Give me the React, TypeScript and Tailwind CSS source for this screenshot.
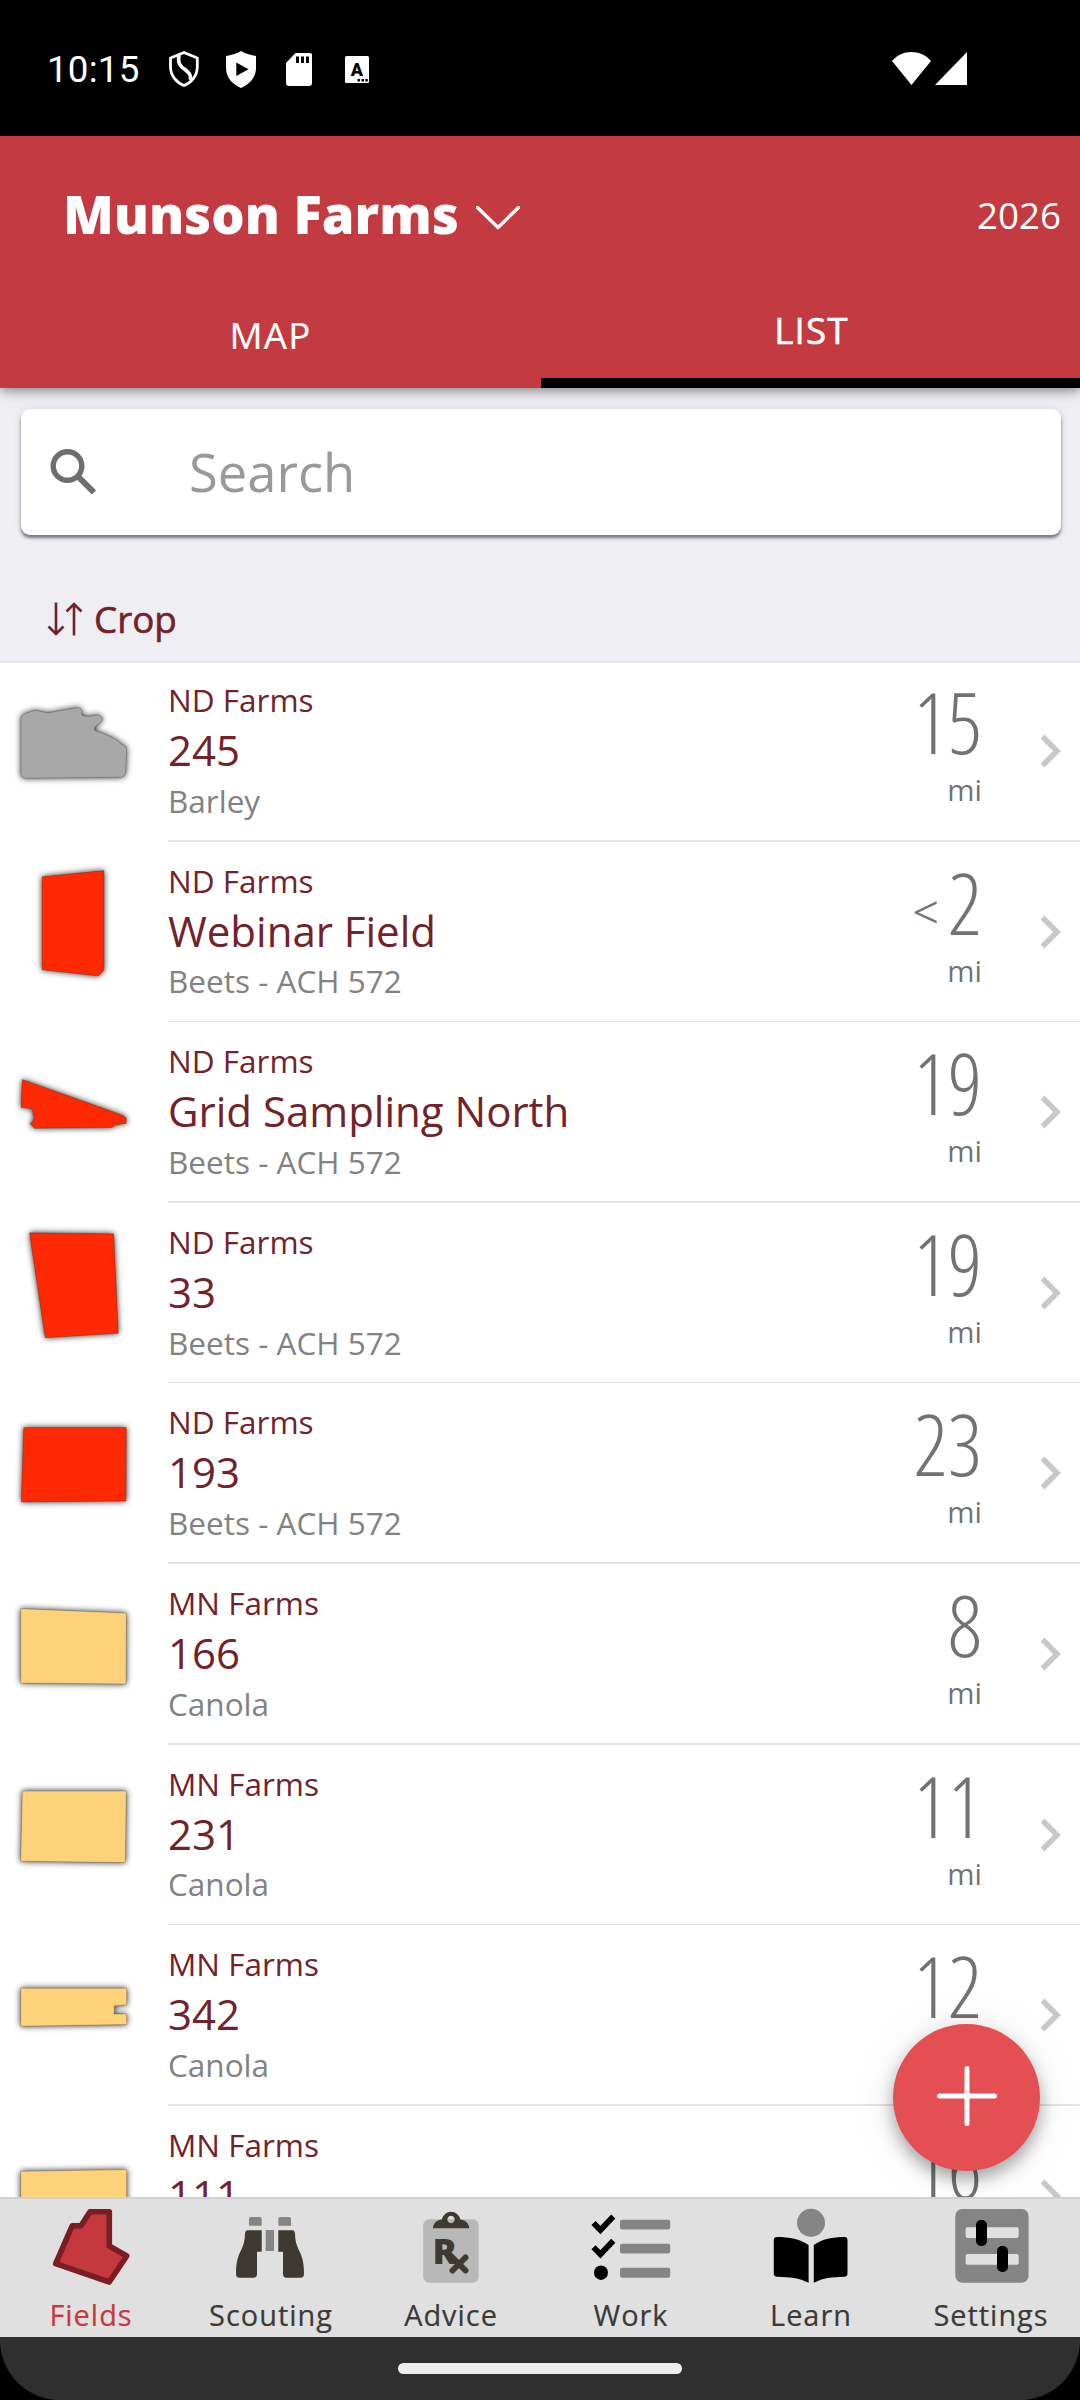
import type { ReactNode } from 'react'

// ── Data ──────────────────────────────────────────────────────────────────────

type Field = {
  farm: string
  name: string
  crop: string
  distance: string
  under?: boolean
  color: string
  shape: string
}

const fields: Field[] = [
  {
    farm: 'ND Farms',
    name: '245',
    crop: 'Barley',
    distance: '15',
    color: '#a8a8a8',
    shape:
      'M21 57 Q21 54.5 24 53 L34 49.6 Q37 49 41 50.5 Q48 52.5 53 51 L76 46.8 Q81 46 82 50 Q80 54 84 55 Q90 56 97 53.8 Q101 54 102.6 58.5 Q101 61.5 97 64 Q93 67 95 69.5 Q104 72.5 112 76.5 Q118 79 121 83 Q126.500 84.500 126.700 88 L125.500 112 Q125 116 121 116.300 L25 117.200 Q21 117 21 113 Z',
  },
  {
    farm: 'ND Farms',
    name: 'Webinar Field',
    crop: 'Beets - ACH 572',
    distance: '2',
    under: true,
    color: '#fe2900',
    shape: 'M42.1 34.8 L104 28.6 V128.1 L98.4 134 L42.1 127.8 Z',
  },
  {
    farm: 'ND Farms',
    name: 'Grid Sampling North',
    crop: 'Beets - ACH 572',
    distance: '19',
    color: '#fe2900',
    shape:
      'M22.2 57.4 L122 93 Q126.300 95.200 126.300 97 V101.400 L115.600 102.800 L111.800 105.600 L34.500 106.300 L29.900 101.800 Q33 99 34.400 96.600 Q32.500 93 32.900 89 Q32 86.300 29 86.300 L21 85.600 Z',
  },
  {
    farm: 'ND Farms',
    name: '33',
    crop: 'Beets - ACH 572',
    distance: '19',
    color: '#fe2900',
    shape: 'M29.5 29.8 L113.7 30.8 L118.3 130.3 L45.2 134.8 Z',
  },
  {
    farm: 'ND Farms',
    name: '193',
    crop: 'Beets - ACH 572',
    distance: '23',
    color: '#fe2900',
    shape: 'M23.7 44.6 H126.3 L126 118 L21.3 119 Z',
  },
  {
    farm: 'MN Farms',
    name: '166',
    crop: 'Canola',
    distance: '8',
    color: '#fed278',
    shape: 'M20.7 44.7 L126.3 49.1 L126 120 L20.7 119 Z',
  },
  {
    farm: 'MN Farms',
    name: '231',
    crop: 'Canola',
    distance: '11',
    color: '#fed278',
    shape: 'M22.3 46 H126.3 L125.3 117.6 L20.7 116.2 Z',
  },
  {
    farm: 'MN Farms',
    name: '342',
    crop: 'Canola',
    distance: '12',
    color: '#fed278',
    shape: 'M20.7 63.2 H126.7 V79.9 L114.3 80.9 V88.9 H126.7 V99.6 L20.7 101.2 Z',
  },
  {
    farm: 'MN Farms',
    name: '111',
    crop: 'Canola',
    distance: '16',
    color: '#fed278',
    shape: 'M20.7 65.3 L126.7 63.6 V135 H20.7 Z',
  },
]

// ── Status Bar ────────────────────────────────────────────────────────────────

const StatusBar = () => (
  <div className="flex h-[136px] items-center bg-black pl-[47px] text-white">
    <span className="mt-[5px] w-[122px] font-[Roboto,sans-serif] text-[36.75px] leading-none tracking-[0.2px]">10:15</span>
    <svg className="mt-[2px] h-[36px] w-[30px]" viewBox="0 0 30 36" fill="none" stroke="white" strokeWidth="2.8">
      <path d="M15 1.500 L28.300 7 V16 C28.300 25 22 32 15 34.500 C8 32 1.500 25 1.500 16 V7 Z" strokeLinejoin="round" />
      <path d="M10 4 C8.500 12 11 15 16 18.500 C20.500 22 22 24 21.500 29" strokeWidth="3.600" />
    </svg>
    <svg className="mt-[2px] ml-[27px] h-[37px] w-[30px]" viewBox="0 0 30 37">
      <path d="M15 0 C20 3 25 4 30 5 V17 C30 27 23 33.500 15 37 C7 33.500 0 27 0 17 V5 C5 4 10 3 15 0 Z" fill="white" />
      <path d="M10.300 11.500 L22.500 18.300 L10.300 25 Z" fill="black" />
    </svg>
    <svg className="mt-[2px] ml-[30px] h-[33px] w-[26px]" viewBox="0 0 26 33">
      <path d="M9.500 0 H24 Q26 0 26 2 V30 Q26 33 23 33 H3 Q0 33 0 30 V10 Z" fill="white" />
      <path d="M10 3.500 H13 V10 H10 Z M15 3.500 H18 V10 H15 Z M20 3.500 H23 V10 H20 Z" fill="black" />
    </svg>
    <svg className="mt-[2px] ml-[33px] h-[27px] w-[24px]" viewBox="0 0 24 27">
      <rect width="24" height="27" rx="1.500" fill="white" />
      <text x="12" y="20" textAnchor="middle" className="font-[Roboto,sans-serif] text-[18px] font-black">A</text>
      <path d="M12.500 23 H15 V25.500 H12.500 Z M16.500 23 H19 V25.500 H16.500 Z M20.300 23 H22.800 V25.500 H20.300 Z" fill="black" />
    </svg>
    <svg className="ml-[523px] h-[33px] w-[39px]" viewBox="0 0 39 33" fill="white">
      <path d="M19.500 33 L0 9 C10 -3 29 -3 39 9 Z" />
    </svg>
    <svg className="ml-[4px] h-[33px] w-[32px]" viewBox="0 0 32 33" fill="white">
      <path d="M32 0 V33 H0 Z" />
    </svg>
  </div>
)

// ── Header ────────────────────────────────────────────────────────────────────

const Header = () => (
  <header className="relative z-10 h-[252px] bg-[#c33b40] text-white shadow-[0_2px_12px_rgba(0,0,0,0.5)]">
    <div className="flex h-[156px] items-center pr-[19px] pl-[63px]">
      <h1 className="text-[52.5px] leading-none font-extrabold">Munson Farms</h1>
      <svg className="mt-[8px] ml-[17px] h-[24px] w-[44px]" viewBox="0 0 44 24" fill="none">
        <path d="M1.500 1.500 L22 21.500 L42.500 1.500" stroke="white" strokeWidth="3.400" strokeLinecap="round" strokeLinejoin="round" />
      </svg>
      <span className="mt-[2px] ml-auto text-[36.75px] leading-none">2026</span>
    </div>
    <div className="flex h-[96px] text-[36.75px] leading-none tracking-[1.2px]">
      <button className="flex w-[541px] items-center justify-center pb-[9px] [-webkit-text-stroke:0.2px]">MAP</button>
      <button className="flex flex-1 items-center justify-center border-b-[10px] border-black pb-[9px] pl-[2px] [-webkit-text-stroke:0.6px]">LIST</button>
    </div>
  </header>
)

// ── Field Row ─────────────────────────────────────────────────────────────────

const FieldRow = ({ field }: { field: Field }) => (
  <li className="flex h-[180.57px] shrink-0">
    <svg className="h-[180px] w-[168px] shrink-0 overflow-visible drop-shadow-[0_0_3px_rgba(0,0,0,0.85)]" viewBox="0 0 168 180">
      <path d={field.shape} fill={field.color} stroke="rgba(0,0,0,0.2)" />
    </svg>
    <div className="flex flex-1 flex-col">
      <div className="flex flex-1 pt-[17px]">
        <div className="flex-1 text-[31.5px] text-[#72222a]">
          <p className="leading-[44px]">{field.farm}</p>
          <p className="text-[42px] leading-[56.8px]">{field.name}</p>
          <p className="leading-[43px] text-[#828282]">{field.crop}</p>
        </div>
        <div className="text-right text-[29.4px] text-[#727272]">
          <p className="flex h-[87px] items-baseline justify-end leading-[87px]">
            {field.under && <span className="relative -top-[6px] mr-[9px] text-[46px] leading-none font-light [-webkit-text-stroke:0.5px]">&lt;</span>}
            <span className="text-[84px] font-light [font-stretch:75%]">{field.distance}</span>
          </p>
          <p className="leading-[50px]">mi</p>
        </div>
        <svg className="mt-[56px] mr-[19px] ml-[58px] h-[34px] w-[21px]" viewBox="0 0 21 34" fill="none">
          <path d="M2.500 2.500 L17 17 L2.500 31.500" stroke="#c8c8c8" strokeWidth="5.500" />
        </svg>
      </div>
      <div className="h-[1.55px] bg-[#e4e4e4]" />
    </div>
  </li>
)

// ── Bottom Navigation ─────────────────────────────────────────────────────────

const NavItem = ({ label, active = false, children }: { label: string; active?: boolean; children: ReactNode }) => (
  <a className={`flex flex-1 flex-col items-center text-[28.9px] leading-[40px] tracking-[1px] ${active ? 'text-[#c9373f]' : 'text-[#3b3a37]'}`}>
    <svg className="h-[90px] w-[90px]" viewBox="0 0 90 90">
      {children}
    </svg>
    <span className="mt-[2px] pl-[2px] [-webkit-text-stroke:0.2px]">{label}</span>
  </a>
)

const BottomNav = () => (
  <nav className="relative flex h-[140px] border-t-2 border-[#d0d0d0] bg-[#e0e0e0] pt-[4px]">
    <NavItem label="Fields" active>
      <path
        d="M45 8.700 H64.300 V43 L81.700 53 L64.300 79 L10.700 60.700 L27.300 22.700 H36 Z"
        fill="#c4383e"
        stroke="#7a1e24"
        strokeWidth="5.600"
        strokeLinejoin="round"
      />
    </NavItem>
    <NavItem label="Scouting">
      <g fill="#858585">
        <path d="M24 22.700 V16 Q24 14 26 14 H34.700 Q36.700 14 36.700 16 V22.700 Z" />
        <path d="M53.300 22.700 V16 Q53.300 14 55.300 14 H64 Q66 14 66 16 V22.700 Z" />
        <path d="M40.700 27 H49 V48 H40.700 Z" />
      </g>
      <g fill="#3e3932">
        <path d="M22.500 27.300 H36.700 V48.700 H32 V71 Q32 74.700 28.500 74.700 H14.500 Q11 74.700 11 71 C11 59 13 53 16 47.500 C18.500 42 20 37 20 31 Q20.300 27.300 22.500 27.300 Z" />
        <path d="M67.500 27.300 H53.300 V48.700 H58 V71 Q58 74.700 61.500 74.700 H75.500 Q79 74.700 79 71 C79 59 77 53 74 47.500 C71.500 42 70 37 70 31 Q69.700 27.300 67.500 27.300 Z" />
      </g>
    </NavItem>
    <NavItem label="Advice">
      <rect x="18.200" y="16.300" width="55.500" height="63.400" rx="6" fill="#b8b8b8" />
      <path
        d="M27.800 25.300 C28.500 20 32 17 37 16.500 A9.200 9.200 0 0 1 55.200 16.500 C60 17 63.800 20 64.400 25.300 Z M46 12.800 A3.700 3.700 0 1 0 46.010 12.800 Z"
        fill="#3e3932"
        fillRule="evenodd"
      />
      <text x="27.500" y="60.500" fill="#3e3932" className="text-[36px] font-extrabold tracking-normal">R</text>
      <path d="M44 51 L60.500 67.500 M60.500 54.500 L47.500 67.500" stroke="#3e3932" strokeWidth="6" strokeLinecap="round" />
    </NavItem>
    <NavItem label="Work">
      <g fill="none" stroke="black" strokeWidth="5.800">
        <path d="M8.500 20 L15.400 27 L28.300 13.500" />
        <path d="M8.500 44.300 L15.400 51.300 L28.300 37.800" />
      </g>
      <ellipse cx="16" cy="69.700" rx="7" ry="7.300" />
      <g fill="#858585">
        <rect x="35" y="16.700" width="50.200" height="9.700" rx="2" />
        <rect x="35" y="40.700" width="50.200" height="9.700" rx="2" />
        <rect x="35" y="64.700" width="50.200" height="10" rx="2" />
      </g>
    </NavItem>
    <NavItem label="Learn">
      <circle cx="46" cy="19.800" r="14" fill="#858585" />
      <path d="M12 34 C24 34 35 36 43.600 42 V79.700 C34 75 25 74 12 73.700 Q8.800 73.500 8.800 70.500 V37 Q8.800 34 12 34 Z" />
      <path d="M79.500 34 C68 34 57 36 48.800 42 V79.700 C58 75 67 74 79.500 73.700 Q82.500 73.500 82.500 70.500 V37 Q82.500 34 79.500 34 Z" />
    </NavItem>
    <NavItem label="Settings">
      <rect x="10.300" y="6" width="73.300" height="73.700" rx="7" fill="#858585" />
      <rect x="20.600" y="24.300" width="53.100" height="10.700" rx="2" fill="#e0e0e0" />
      <rect x="20.600" y="51" width="53.100" height="10.700" rx="2" fill="#e0e0e0" />
      <rect x="31" y="17" width="11" height="26" rx="5" />
      <rect x="52" y="43" width="11" height="26" rx="5" />
    </NavItem>
  </nav>
)

// ── Main Screen ───────────────────────────────────────────────────────────────

export default function App() {
  return (
    <div className="relative flex h-[2400px] w-[1080px] flex-col overflow-hidden bg-white font-['Open_Sans',sans-serif]">
      <StatusBar />
      <Header />

      {/* Search and sort */}
      <div className="h-[273.13px] shrink-0 bg-[#eeeef3] px-[21px] pt-[21px] text-[#72222a]">
        <div className="flex h-[126px] w-[1040px] items-center rounded-[9px] bg-white pl-[29px] shadow-[0_3px_3px_rgba(0,0,0,0.45),0_1px_8px_rgba(0,0,0,0.12)]">
          <svg className="h-[46px] w-[46px]" viewBox="0 0 46 46" fill="none" stroke="#6e6e6e">
            <circle cx="17.500" cy="17" r="14.300" strokeWidth="5.400" />
            <path d="M28 27.500 L44 43.500" strokeWidth="6" />
          </svg>
          <span className="mt-[1px] ml-[93px] text-[52.5px] leading-none text-[#999999]">Search</span>
        </div>
        <div className="mt-[41px] flex h-[85px] items-center pl-[26px]">
          <svg className="h-[34px] w-[36px]" viewBox="0 0 36 34" fill="none" stroke="#72222a" strokeWidth="2.600">
            <path d="M9 0.500 V32 M1.500 24.500 L9 32 L16.500 24.500" />
            <path d="M27 33.500 V2 M19.500 9.500 L27 2 L34.500 9.500" />
          </svg>
          <span className="mt-[2px] ml-[11px] text-[36.75px] leading-none [-webkit-text-stroke:0.6px]">Crop</span>
        </div>
      </div>

      {/* Field list */}
      <ul className="min-h-0 flex-1 overflow-hidden shadow-[inset_0_1.5px_0_#dcdce1]">
        {fields.map((field) => (
          <FieldRow key={field.name} field={field} />
        ))}
      </ul>

      {/* Add button */}
      <button className="absolute top-[2024px] left-[893px] flex h-[147px] w-[147px] items-center justify-center rounded-full bg-[#e44f54] shadow-[0_8px_16px_rgba(0,0,0,0.32),0_4px_44px_rgba(0,0,0,0.1)]">
        <svg className="mb-[4px] h-[60px] w-[60px]" viewBox="0 0 60 60" fill="none">
          <path d="M30 2.500 V57.500 M2.500 30 H57.500" stroke="white" strokeWidth="5" strokeLinecap="round" />
        </svg>
      </button>

      <BottomNav />

      {/* Gesture bar */}
      <div className="h-[63px] shrink-0 bg-black">
        <div className="flex h-full justify-center rounded-b-[60px] bg-[#2f2f2f] pt-[26px]">
          <div className="h-[11px] w-[284px] rounded-full bg-[#eeeeee]" />
        </div>
      </div>
    </div>
  )
}
